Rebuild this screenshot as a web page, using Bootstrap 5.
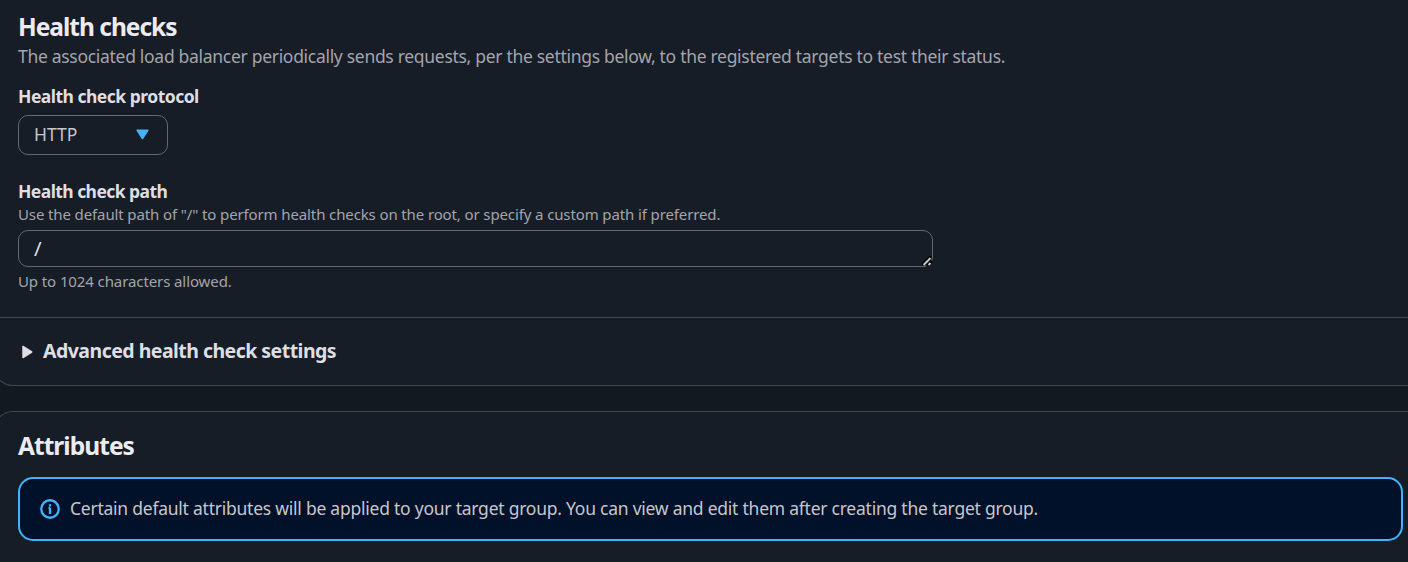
<!DOCTYPE html>
<html lang="en" data-bs-theme="dark">
<head>
<meta charset="utf-8">
<meta name="viewport" content="width=device-width, initial-scale=1">
<title>Health checks</title>
<link href="https://cdn.jsdelivr.net/npm/bootstrap@5.3.0/dist/css/bootstrap.min.css" rel="stylesheet">
<style>
  body { background: #131920; color: #c6c6cd; font-family: "Noto Sans", "Open Sans", sans-serif; font-size: 17.5px; line-height: 22px; }
  .panel { background: #161d26; border: 1px solid #424650; border-radius: 20px; margin: 0 -20px 0 -7px; }
  .panel-first { border-top: 0; border-top-left-radius: 0; border-top-right-radius: 0; height: 386px; }
  .panel-second { margin-top: 25px; height: 151px; padding: 19px 24px 0; border-bottom: 0; border-bottom-left-radius: 0; border-bottom-right-radius: 0; }
  .panel-main { padding: 12px 24px 0; height: 317px; }
  .title { color: #ebebf0; font-size: 24.5px; font-weight: 700; line-height: 30px; letter-spacing: -1px; }
  .title-attr { letter-spacing: -.95px; }
  .desc { color: #a4a4ad; margin-top: 3px; letter-spacing: -.3px; }
  .field-label { color: #dedee3; font-weight: 700; letter-spacing: -.51px; margin-top: 18px; }
  .label-path { margin-top: 25px; letter-spacing: -.56px; }
  .hint { color: #a4a4ad; font-size: 15px; line-height: 20px; letter-spacing: -.12px; margin-top: 2px; }
  .hint-limit { margin-top: 4px; letter-spacing: -.1px; }
  .picker { width: 150px; height: 40px; margin-top: 8px; border: 1px solid #656871; border-radius: 10px; padding: 0 18px 2px 15px; background: #161d26; color: #c6c6cd; }
  .picker svg { margin-top: 1px; }
  .path-box { width: 915px; height: 37px; margin-top: 6px; border: 1px solid #656871; border-radius: 10px; padding: 6px 15px; background: #161d26; color: #dedee3; }
  .path-box span { font-size: 20.5px; }
  .grip { right: 0; bottom: 0; }
  .expander { border-top: 1px solid #424650; padding: 22px 24px 0 27px; }
  .expander svg { margin-top: 1px; }
  .expander-title { color: #dedee3; font-size: 19.5px; font-weight: 700; letter-spacing: -.53px; margin-left: 9px; }
  .notice { height: 64px; width: 1385px; margin-top: 16px; border: 2px solid #42b4ff; border-radius: 15px; background: #001129; padding: 0 20px; letter-spacing: -.24px; gap: 10px; }
  .notice span { margin-top: -2px; }
</style>
</head>
<body class="overflow-hidden">
<section class="panel panel-first">
  <div class="panel-main">
    <h2 class="title mb-0">Health checks</h2>
    <p class="desc mb-0">The associated load balancer periodically sends requests, per the settings below, to the registered targets to test their status.</p>
    <div class="field-label">Health check protocol</div>
    <button type="button" class="picker d-flex align-items-center justify-content-between">
      <span>HTTP</span>
      <svg width="13" height="11" viewBox="0 0 13 11"><path d="M1.200 1.200h10.600L6.500 9.500z" fill="#42b4ff" stroke="#42b4ff" stroke-width="1.600" stroke-linejoin="round"/></svg>
    </button>
    <div class="field-label label-path">Health check path</div>
    <div class="hint">Use the default path of "/" to perform health checks on the root, or specify a custom path if preferred.</div>
    <div class="path-box position-relative"><span>/</span>
      <svg class="grip position-absolute" width="10" height="10" viewBox="0 0 10 10"><path d="M0 9L9 0M5 10L10 5" stroke="#000" stroke-width="2.500"/><path d="M1.500 9L8.500 2M6.500 9L8.500 7" stroke="#c9c9c9" stroke-width="1.800"/></svg>
    </div>
    <div class="hint hint-limit">Up to 1024 characters allowed.</div>
  </div>
  <div class="expander d-flex align-items-center">
    <svg width="13" height="14" viewBox="0 0 13 14"><path d="M2 1.500v11L10.700 7z" fill="#dedee3" stroke="#dedee3" stroke-width="1.500" stroke-linejoin="round"/></svg>
    <span class="expander-title">Advanced health check settings</span>
  </div>
</section>
<section class="panel panel-second">
  <h2 class="title title-attr mb-0">Attributes</h2>
  <div class="notice d-flex align-items-center">
    <svg width="20" height="20" viewBox="0 0 20 20" fill="none" stroke="#42b4ff" stroke-width="2.300"><circle cx="10" cy="10" r="8.750"/><path d="M10 8.700v6.300M8.500 9.200H10M10 5.200v2.300"/></svg>
    <span>Certain default attributes will be applied to your target group. You can view and edit them after creating the target group.</span>
  </div>
</section>
<script src="https://cdn.jsdelivr.net/npm/bootstrap@5.3.0/dist/js/bootstrap.bundle.min.js"></script>
</body>
</html>
